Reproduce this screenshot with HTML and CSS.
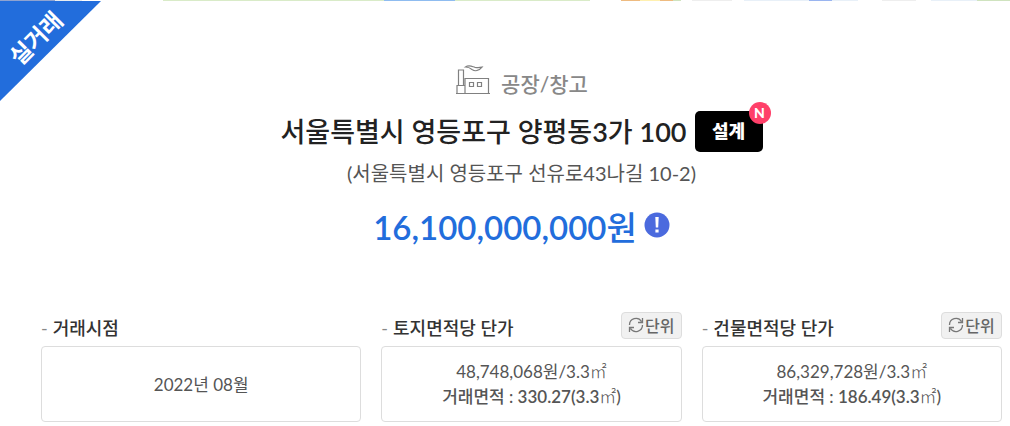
FILE: index.html
```html
<!DOCTYPE html>
<html lang="ko">
<head>
    <meta charset="UTF-8">
    <meta name="viewport" content="width=device-width, initial-scale=1.0">
    <title>실거래 정보</title>
    <link rel="stylesheet" href="styles.css">
</head>
<body>

    <!-- Bottom edge of the map -->
    <div class="map-edge"></div>

    <main class="deal">
        <div class="ribbon"><span>실거래</span></div>

        <!-- Summary -->
        <section class="summary">
            <p class="category">
                <svg class="factory-icon" viewBox="0 0 36 32" aria-hidden="true">
                    <path d="M1 29.500H35M2 29V21.500H10V29M3.500 21V6H8.500V21M10 21V14.500H33.500V29M14.500 18.500H18.500V22.500H14.500ZM22.500 18.500H26.500V22.500H22.500Z"/>
                    <path d="M10.500 3C14 .5 17 2.500 20 3.300Q23 4 27 3.200C24 7 20 7.500 17 5.500Q14 3 10.500 3Z"/>
                </svg>
                <span>공장/창고</span>
            </p>
            <div class="title-row">
                <h1>서울특별시 영등포구 양평동<span class="num">3</span>가 <span class="num">100</span></h1>
                <button type="button" class="design-btn">설계<span class="new-badge">N</span></button>
            </div>
            <p class="address">(서울특별시 영등포구 선유로43나길 10-2)</p>
            <p class="price">
                <strong><span class="num">16,100,000,000</span>원</strong>
                <svg class="info-icon" viewBox="0 0 26 26" role="img" aria-label="안내">
                    <circle cx="13" cy="13" r="12.500"/>
                    <path d="M11.300 5H14.700L14.200 15.500H11.800ZM11.400 17.500H14.600V20.500H11.400Z"/>
                </svg>
            </p>
        </section>

        <!-- Details -->
        <section class="details">
            <div class="detail">
                <div class="detail-head">
                    <h2>거래시점</h2>
                </div>
                <div class="detail-box">
                    <p>2022년 08월</p>
                </div>
            </div>
            <div class="detail">
                <div class="detail-head">
                    <h2>토지면적당 단가</h2>
                    <button type="button" class="unit-btn">
                        <svg viewBox="0 0 16 16" aria-hidden="true"><path d="M1.500 8A6.500 6.500 0 0 1 13.500 4.500M14.500 1V5.500H10M14.500 8A6.500 6.500 0 0 1 2.500 11.500M1.500 15V10.500H6"/></svg>단위
                    </button>
                </div>
                <div class="detail-box">
                    <p>48,748,068원/3.3<span class="unit">㎡</span></p>
                    <p class="area">거래면적 : <span class="num">330.27(3.3</span><span class="unit">㎡</span>)</p>
                </div>
            </div>
            <div class="detail">
                <div class="detail-head">
                    <h2>건물면적당 단가</h2>
                    <button type="button" class="unit-btn">
                        <svg viewBox="0 0 16 16" aria-hidden="true"><path d="M1.500 8A6.500 6.500 0 0 1 13.500 4.500M14.500 1V5.500H10M14.500 8A6.500 6.500 0 0 1 2.500 11.500M1.500 15V10.500H6"/></svg>단위
                    </button>
                </div>
                <div class="detail-box">
                    <p>86,329,728원/3.3<span class="unit">㎡</span></p>
                    <p class="area">거래면적 : <span class="num">186.49(3.3</span><span class="unit">㎡</span>)</p>
                </div>
            </div>
        </section>
    </main>

</body>
</html>
```
FILE: styles.css
```css
* {
    box-sizing: border-box;
}

body {
    margin: 0;
    background-color: #fff;
    color: #555;
    font-family: Lato, "Noto Sans CJK KR", sans-serif;
    font-size: 17px;
    line-height: 25px;
}

h1, h2, p {
    margin: 0;
}

button {
    font-family: inherit;
    cursor: pointer;
}

.num {
    font-weight: 600;
}

.map-edge {
    height: 1px;
    background: linear-gradient(to right,
        #8fa3d0 0 55px, #e8edf0 55px 82px, #fff 82px 163px,
        #d9ebc8 163px 384px, #8fbcf0 384px 455px, #d9ebc8 455px 590px,
        #fff 590px 621px, #eebb80 621px 640px, #fff0b0 640px 660px,
        #eebb80 660px 673px, #cfe3bf 673px 681px, #fff 681px 692px,
        #eee 692px 732px, #fff 732px 744px, #e8f0f8 744px 809px,
        #9ab5f0 809px 832px, #e8f0f8 832px 858px, #fff 858px 882px,
        #eee 882px 916px, #fff 916px 931px, #e8f0f8 931px 977px, #cfe3bf 977px);
}

.deal {
    position: relative;
    padding: 63px 8px 4px 41px;
}

/* Corner ribbon */
.ribbon {
    position: absolute;
    top: 0;
    left: 0;
    width: 101px;
    height: 100px;
    display: flex;
    padding: 22px 0 0 4px;
    background-color: #226ddc;
    clip-path: polygon(0 0, 100% 0, 0 100%);
    color: #fff;
    font-size: 23px;
    font-weight: 700;
    line-height: 30px;
}

.ribbon span {
    height: 30px;
    transform: rotate(-45deg);
}

/* Summary */
.summary {
    text-align: center;
}

.category {
    display: flex;
    justify-content: center;
    align-items: center;
    gap: 10px;
    height: 38px;
    color: #888;
    font-size: 21px;
    font-weight: 500;
}

.factory-icon {
    width: 36px;
    height: 32px;
    margin-bottom: 6px;
    fill: none;
    stroke: #808080;
    stroke-width: 1.2;
}

.title-row {
    display: flex;
    justify-content: center;
    align-items: center;
    gap: 8px;
    margin-top: 9px;
}

h1 {
    color: #222;
    font-size: 27px;
    font-weight: 500;
    line-height: 41px;
}

.design-btn {
    position: relative;
    width: 68px;
    height: 41px;
    padding: 0 0 3px;
    border: 0;
    border-radius: 5px;
    background-color: #000;
    color: #fff;
    font-size: 18px;
    font-weight: 900;
}

.new-badge {
    position: absolute;
    top: -9px;
    right: -8px;
    width: 22px;
    height: 22px;
    border-radius: 50%;
    background-color: #ff4069;
    font-size: 14px;
    line-height: 22px;
}

.address {
    margin-top: 9px;
    font-size: 20px;
}

.price {
    display: flex;
    justify-content: center;
    align-items: center;
    gap: 7px;
    margin-top: 19px;
    color: #226ddc;
    font-size: 33px;
    line-height: 44px;
}

.price strong {
    font-weight: 500;
}

.info-icon {
    width: 26px;
    height: 26px;
    margin-bottom: 4px;
    fill: #4b6ade;
}

.info-icon path {
    fill: #fff;
}

/* Details */
.details {
    display: grid;
    grid-template-columns: 16fr 15fr 15fr;
    gap: 20px;
    margin-top: 63px;
}

.detail-head {
    display: flex;
    justify-content: space-between;
    align-items: flex-start;
    height: 34px;
}

h2 {
    color: #333;
    font-size: 18px;
    font-weight: 500;
    line-height: 32px;
}

h2::before {
    content: "-";
    margin-right: 5px;
    color: #888;
    font-weight: 400;
}

.unit-btn {
    display: flex;
    justify-content: center;
    align-items: center;
    gap: 1px;
    width: 61px;
    height: 27px;
    padding: 0 0 2px;
    border: 1px solid #ddd;
    border-radius: 4px;
    background-color: #f1f1f1;
    color: #666;
    font-size: 16px;
    font-weight: 500;
}

.unit-btn svg {
    width: 16px;
    height: 16px;
    fill: none;
    stroke: #777;
    stroke-width: 1.3;
}

.detail-box {
    display: flex;
    flex-direction: column;
    justify-content: center;
    min-height: 76px;
    border: 1px solid #ddd;
    border-radius: 4px;
    text-align: center;
}

.area {
    font-weight: 500;
}

.unit {
    font-weight: 300;
}
```
